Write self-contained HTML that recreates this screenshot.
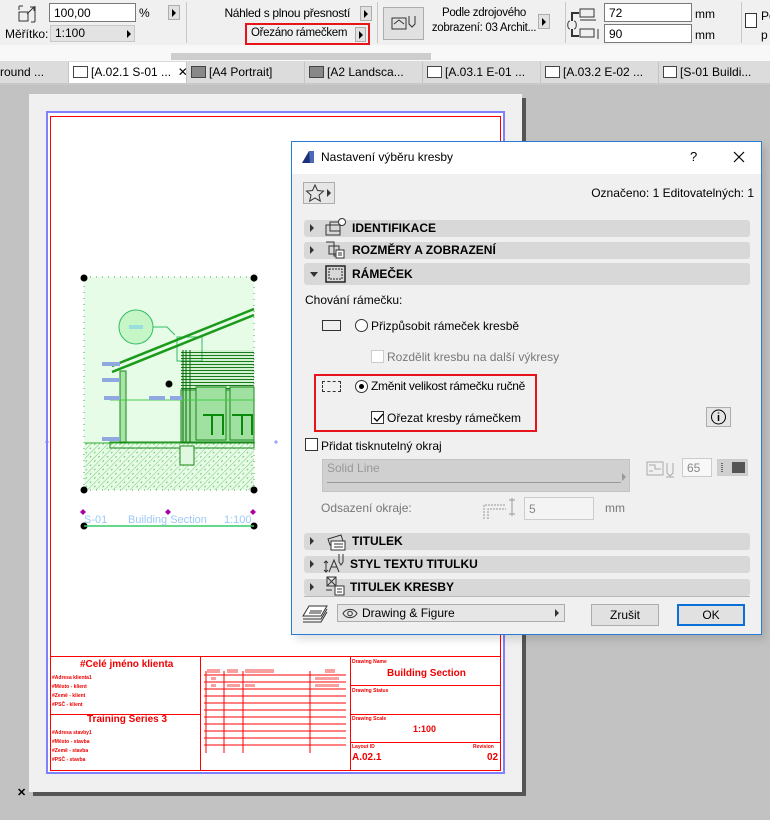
<!DOCTYPE html>
<html><head><meta charset="utf-8">
<style>
*{margin:0;padding:0;box-sizing:border-box}
body{width:770px;height:820px;overflow:hidden;background:#c2c2c2;font-family:"Liberation Sans",sans-serif;font-size:12px;color:#000;position:relative}
.a{position:absolute;white-space:nowrap}
.tb{letter-spacing:-0.3px}
.fld{position:absolute;background:#fff;border:1px solid #7a7a7a;font-size:12px;padding:1px 0 0 4px;line-height:16px}
.btn{position:absolute;background:#e1e1e1;border:1px solid #adadad}
.tri{width:0;height:0;border-top:4px solid transparent;border-bottom:4px solid transparent;border-left:4px solid #000;position:absolute}
.sep{position:absolute;width:1px;background:#c8c8c8}
.tab{position:absolute;top:62px;height:21px;font-size:12px;line-height:21px;padding-left:4px;white-space:nowrap;overflow:hidden;border-right:1px solid #c4c4c4}
.ti{display:inline-block;width:15px;height:12px;border:1px solid #444;vertical-align:-2px;margin-right:3px;background:#fff}
.sec{position:absolute;left:304px;width:446px;height:17px;background:#d8d8d8;border-radius:3px;font-weight:bold;font-size:12px;line-height:17px}
.sec .tri{left:6px;top:4px;border-left-color:#333}
.sec span{position:absolute;left:48px}
.rt{font-family:"Liberation Sans",sans-serif;color:#e00;font-weight:bold;position:absolute;white-space:nowrap}
</style></head><body>

<!-- toolbar -->
<div class="a" style="left:0;top:0;width:770px;height:45px;background:#f0f0f0"></div>
<div class="a" style="left:0;top:45px;width:770px;height:16px;background:#f8f8f8"></div>
<div class="a" style="left:171px;top:53px;width:260px;height:7px;background:#cdcdcd"></div>
<svg class="a" style="left:18px;top:5px" width="18" height="18"><rect x="1" y="7" width="9" height="9" fill="none" stroke="#333"/><path d="M1 1h4M1 1v4M17 1v16M17 17h-4M9 9l7-7M12 2h4v4" fill="none" stroke="#333"/></svg>
<div class="fld" style="left:49px;top:3px;width:87px;height:19px">100,00</div>
<div class="a" style="left:139px;top:6px">%</div>
<div class="btn" style="left:168px;top:5px;width:12px;height:15px"><div class="tri" style="left:3px;top:3px"></div></div>
<div class="a" style="left:5px;top:27px">Měřítko:</div>
<div class="a" style="left:50px;top:25px;width:85px;height:17px;background:#e3e3e3;border:1px solid #c8c8c8;padding-left:4px;line-height:15px">1:100<div class="tri" style="left:76px;top:4px"></div></div>
<div class="sep" style="left:186px;top:2px;height:41px"></div>
<div class="a tb" style="left:200px;top:6px;width:150px;text-align:right">Náhled s plnou přesností</div>
<div class="btn" style="left:360px;top:6px;width:12px;height:15px"><div class="tri" style="left:3px;top:3px"></div></div>
<div class="a" style="left:245px;top:23px;width:125px;height:22px;border:2px solid #e8141c"></div>
<div class="a tb" style="left:251px;top:27px;font-size:11.5px">Ořezáno rámečkem</div>
<div class="btn" style="left:355px;top:27px;width:11px;height:15px"><div class="tri" style="left:3px;top:3px"></div></div>
<div class="sep" style="left:377px;top:2px;height:41px"></div>
<div class="btn" style="left:383px;top:7px;width:41px;height:33px"><svg width="39" height="31"><rect x="8" y="10" width="14" height="11" fill="none" stroke="#333"/><path d="M10 16l5-4 5 4M25 8v8l3 3 3-3V8" fill="none" stroke="#333"/></svg></div>
<div class="a tb" style="left:426px;top:6px;width:116px;text-align:center;line-height:15px;font-size:11.5px">Podle zdrojového<br>zobrazení: 03 Archit...</div>
<div class="btn" style="left:538px;top:14px;width:12px;height:15px"><div class="tri" style="left:3px;top:3px"></div></div>
<div class="sep" style="left:565px;top:2px;height:41px"></div>
<svg class="a" style="left:566px;top:3px" width="36" height="40"><path d="M8 10h-2v8M6 26v7h4M8 10h5M6 33h7" fill="none" stroke="#333" stroke-width="2"/><rect x="14" y="6" width="14" height="8" fill="none" stroke="#333"/><rect x="14" y="26" width="14" height="8" fill="none" stroke="#333"/><path d="M14 17h16M32 26v10" stroke="#333"/><path d="M4 18c-3 0-3 8 0 8M8 18c3 0 3 8 0 8" fill="none" stroke="#333"/></svg>
<div class="fld" style="left:604px;top:3px;width:88px;height:19px">72</div>
<div class="fld" style="left:604px;top:24px;width:88px;height:19px">90</div>
<div class="a" style="left:695px;top:7px">mm</div>
<div class="a" style="left:695px;top:28px">mm</div>
<div class="sep" style="left:741px;top:2px;height:41px"></div>
<div class="a" style="left:745px;top:13px;width:12px;height:15px;border:1px solid #333;background:#fff"></div>
<div class="a" style="left:761px;top:7px;line-height:19px">Po<br>p</div>

<!-- tabs -->
<div class="a" style="left:0;top:61px;width:770px;height:23px;background:#dcdcdc"></div>
<div class="a" style="left:0;top:83px;width:770px;height:2px;background:#c8c8c8"></div>
<div class="tab" style="left:0;width:69px;padding-left:0">round ...</div>
<div class="tab" style="left:69px;width:118px;background:#fff"><span class="ti"></span>[A.02.1 S-01 ... &nbsp;✕</div>
<div class="tab" style="left:187px;width:118px"><span class="ti" style="background:#888"></span>[A4 Portrait]</div>
<div class="tab" style="left:305px;width:118px"><span class="ti" style="background:#888"></span>[A2 Landsca...</div>
<div class="tab" style="left:423px;width:118px"><span class="ti"></span>[A.03.1 E-01 ...</div>
<div class="tab" style="left:541px;width:118px"><span class="ti"></span>[A.03.2 E-02 ...</div>
<div class="tab" style="left:659px;width:118px;border:none"><span class="ti" style="border-radius:0;width:14px"></span>[S-01 Buildi...</div>

<!-- paper -->
<div class="a" style="left:33px;top:98px;width:493px;height:698px;background:#555"></div>
<div class="a" style="left:29px;top:94px;width:493px;height:698px;background:#f0f0f0"></div>
<div class="a" style="left:46px;top:111px;width:459px;height:663px;border:2px solid #8080ff;background:#fff"></div>
<div class="a" style="left:50px;top:116px;width:451px;height:655px;border:1px solid #f00"></div>
<div class="a" style="left:17px;top:786px;font-size:11px;font-weight:bold">✕</div>

<!-- title block -->
<div class="a" style="left:51px;top:656px;width:450px;height:1px;background:#f00"></div>
<div class="a" style="left:200px;top:657px;width:1px;height:114px;background:#f00"></div>
<div class="a" style="left:350px;top:657px;width:1px;height:114px;background:#f00"></div>
<div class="a" style="left:51px;top:714px;width:149px;height:1px;background:#f00"></div>
<div class="a" style="left:350px;top:685px;width:151px;height:1px;background:#f00"></div>
<div class="a" style="left:350px;top:714px;width:151px;height:1px;background:#f00"></div>
<div class="a" style="left:350px;top:742px;width:151px;height:1px;background:#f00"></div>
<svg class="a" style="left:202px;top:668px" width="146" height="86">
<g stroke="#f00" stroke-width="1"><path d="M4 3v82M22 3v82M41 3v82M108 3v82"/>
<path d="M2 7h142M2 14h142M2 21h142M2 28h142M2 35h142M2 42h142M2 49h142M2 56h142M2 63h142M2 70h142M2 77h142"/></g>
<g fill="#f8a0a0"><rect x="5" y="1" width="13" height="4"/><rect x="25" y="1" width="11" height="4"/><rect x="43" y="1" width="29" height="4"/><rect x="123" y="1" width="10" height="4"/><rect x="9" y="9" width="5" height="3"/><rect x="113" y="9" width="24" height="3"/><rect x="9" y="16" width="5" height="3"/><rect x="25" y="16" width="13" height="3"/><rect x="43" y="16" width="10" height="3"/><rect x="113" y="16" width="24" height="3"/></g></svg>
<div class="rt" style="left:80px;top:659px;font-size:10px">#Celé jméno klienta</div>
<div class="rt" style="left:52px;top:674px;font-size:5px;line-height:9px">#Adresa klienta1<br>#Město - klient<br>#Země - klient<br>#PSČ - klient</div>
<div class="rt" style="left:87px;top:714px;font-size:10px">Training Series 3</div>
<div class="rt" style="left:52px;top:729px;font-size:5px;line-height:9px">#Adresa stavby1<br>#Město - stavba<br>#Země - stavba<br>#PSČ - stavba</div>
<div class="rt" style="left:352px;top:659px;font-size:5px">Drawing Name</div>
<div class="rt" style="left:387px;top:668px;font-size:10px">Building Section</div>
<div class="rt" style="left:352px;top:688px;font-size:5px">Drawing Status</div>
<div class="rt" style="left:352px;top:716px;font-size:5px">Drawing Scale</div>
<div class="rt" style="left:413px;top:724px;font-size:9px">1:100</div>
<div class="rt" style="left:352px;top:744px;font-size:5px">Layout ID</div>
<div class="rt" style="left:473px;top:744px;font-size:5px">Revision</div>
<div class="rt" style="left:352px;top:752px;font-size:10px">A.02.1</div>
<div class="rt" style="left:487px;top:752px;font-size:10px">02</div>

<!-- drawing -->
<svg class="a" style="left:0;top:0" width="290" height="540">
<defs><pattern id="h" width="6" height="6" patternUnits="userSpaceOnUse" patternTransform="rotate(45)"><path d="M0 0v6M3 0v2" stroke="#5cb85c" stroke-width="0.8"/></pattern>
<pattern id="g" width="3" height="3" patternUnits="userSpaceOnUse"><path d="M0 1.5h3" stroke="#1a7a1a" stroke-width="1.2"/></pattern></defs>
<rect x="84" y="277" width="170" height="213" fill="#e6fce6"/>
<rect x="84" y="277" width="170" height="213" fill="none" stroke="#4cae4c" stroke-dasharray="1 5"/>
<rect x="85" y="443" width="169" height="47" fill="url(#h)"/>
<path d="M85 443h170" stroke="#3a3" stroke-width="1"/>
<circle cx="136" cy="327" r="17" fill="#c6f5c6" stroke="#3b6"/>
<rect x="129" y="325" width="14" height="4" fill="#9dd"/>
<path d="M153 327h14l8 8" fill="none" stroke="#3b6"/>
<rect x="177" y="337" width="25" height="24" fill="none" stroke="#3b6"/>
<path d="M112 366l142-57M112 372l142-57" stroke="#1a9a1a" stroke-width="2.5"/>
<rect x="120" y="371" width="6" height="72" fill="#a8e6a8" stroke="#1a8a1a"/>
<rect x="181" y="350" width="73" height="64" fill="url(#g)"/>
<rect x="181" y="390" width="73" height="53" fill="#9fdf9f" stroke="#1a8a1a"/>
<path d="M183 350v93M186 350v93M190 350v93" stroke="#0a6a0a"/>
<rect x="196" y="387" width="30" height="53" fill="#a0e0a0" stroke="#1a8a1a"/><rect x="230" y="387" width="24" height="53" fill="#a0e0a0" stroke="#1a8a1a"/>
<path d="M203 415h20v20M212 415v20M232 415h20v20M242 415v20" fill="none" stroke="#0a8a0a" stroke-width="2"/>
<path d="M110 400h144" stroke="#4c4" />
<rect x="110" y="442" width="144" height="6" fill="none" stroke="#1a8a1a"/>
<rect x="180" y="446" width="14" height="19" fill="#e0f8e0" stroke="#1a8a1a"/>
<g fill="#8fa8e0"><rect x="102" y="362" width="18" height="4"/><rect x="102" y="378" width="18" height="4"/><rect x="104" y="396" width="16" height="4"/><rect x="149" y="396" width="16" height="4"/><rect x="170" y="396" width="12" height="4"/><rect x="102" y="437" width="18" height="4"/></g>
<g fill="#000"><circle cx="84" cy="278" r="3.5"/><circle cx="254" cy="278" r="3.5"/><circle cx="84" cy="490" r="3.5"/><circle cx="254" cy="490" r="3.5"/><circle cx="169" cy="384" r="3.5"/><circle cx="84" cy="526" r="3.5"/><circle cx="254" cy="526" r="3.5"/></g>
<path d="M84 526h170" stroke="#3c6" stroke-width="1.5"/>
<text x="84" y="523" font-family="Liberation Sans" font-size="11" fill="#9ec8f8">S-01</text>
<text x="128" y="523" font-family="Liberation Sans" font-size="11" fill="#9ec8f8">Building Section</text>
<text x="224" y="523" font-family="Liberation Sans" font-size="11" fill="#9ec8f8">1:100</text>
<g fill="#a0a"><path d="M83 509l3 3-3 3-3-3z"/><path d="M168 509l3 3-3 3-3-3z"/><path d="M253 509l3 3-3 3-3-3z"/></g>
<path d="M45 442h4M274 442h4M276 440v4" stroke="#88f"/>
</svg>

<!-- dialog -->
<div class="a" style="left:296px;top:146px;width:470px;height:494px;background:rgba(0,0,0,0.12);filter:blur(4px)"></div>
<div class="a" style="left:291px;top:141px;width:471px;height:494px;background:#f0f0f0;border:1px solid #2a7bd4"></div>
<div class="a" style="left:292px;top:142px;width:469px;height:32px;background:#fff"></div>
<svg class="a" style="left:301px;top:150px" width="14" height="14"><path d="M1 13L8 1h5v12z" fill="#1c2f7a"/><path d="M8 1h5v12H9z" fill="#4a6ab8"/></svg>
<div class="a" style="left:321px;top:150px;font-size:12px">Nastavení výběru kresby</div>
<div class="a" style="left:690px;top:149px;font-size:13px">?</div>
<svg class="a" style="left:733px;top:151px" width="12" height="12"><path d="M1 1l10 10M11 1L1 11" stroke="#000" stroke-width="1.2"/></svg>
<div class="btn" style="left:303px;top:182px;width:32px;height:22px;background:#e6e6e6"><svg width="30" height="20"><path d="M11 2l2.5 5.5 6 .6-4.5 4 1.3 6L11 15l-5.3 3.1 1.3-6-4.5-4 6-.6z" fill="none" stroke="#333"/><path d="M23 6l4 4-4 4z" fill="#333"/></svg></div>
<div class="a" style="left:560px;top:186px;width:194px;text-align:right">Označeno: 1 Editovatelných: 1</div>

<div class="sec" style="top:220px"><div class="tri"></div><svg class="a" style="left:21px;top:-2px" width="22" height="20"><rect x="1" y="7" width="14" height="10" fill="none" stroke="#333"/><rect x="5" y="4" width="10" height="9" fill="none" stroke="#333"/><circle cx="17" cy="4" r="3.5" fill="#fff" stroke="#333"/></svg><span>IDENTIFIKACE</span></div>
<div class="sec" style="top:242px"><div class="tri"></div><svg class="a" style="left:21px;top:-1px" width="22" height="20"><path d="M1 1h8v14h6" fill="none" stroke="#333"/><rect x="4" y="5" width="10" height="8" fill="none" stroke="#333"/><rect x="11" y="9" width="8" height="8" fill="#fff" stroke="#333"/><path d="M13 12h4M13 14h4" stroke="#333"/></svg><span>ROZMĚRY A ZOBRAZENÍ</span></div>
<div class="sec" style="top:263px;height:22px;line-height:22px"><div class="tri" style="left:6px;top:9px;border-left:4px solid transparent;border-right:4px solid transparent;border-top:5px solid #333;border-bottom:none"></div><svg class="a" style="left:21px;top:2px" width="22" height="20"><rect x="1" y="1" width="19" height="16" fill="none" stroke="#222" stroke-width="1.5"/><rect x="4" y="4" width="13" height="10" fill="none" stroke="#222" stroke-dasharray="2 1"/></svg><span>RÁMEČEK</span></div>

<div class="a" style="left:305px;top:293px">Chování rámečku:</div>
<div class="a" style="left:322px;top:320px;width:19px;height:11px;border:1px solid #333"></div>
<div class="a" style="left:355px;top:319px;width:13px;height:13px;border:1px solid #333;border-radius:50%;background:#fff"></div>
<div class="a" style="left:371px;top:319px">Přizpůsobit rámeček kresbě</div>
<div class="a" style="left:371px;top:350px;width:13px;height:13px;border:1px solid #ccc;background:#fff"></div>
<div class="a" style="left:387px;top:350px;color:#777">Rozdělit kresbu na další výkresy</div>
<div class="a" style="left:314px;top:374px;width:223px;height:58px;border:2px solid #e8141c"></div>
<div class="a" style="left:322px;top:381px;width:19px;height:11px;border:1px dashed #333"></div>
<div class="a" style="left:355px;top:380px;width:13px;height:13px;border:1px solid #333;border-radius:50%;background:#fff"><div class="a" style="left:3px;top:3px;width:5px;height:5px;border-radius:50%;background:#000"></div></div>
<div class="a tb" style="left:371px;top:379px">Změnit velikost rámečku ručně</div>
<div class="a" style="left:371px;top:411px;width:13px;height:13px;border:1px solid #333;background:#fff"><svg class="a" style="left:0;top:0" width="12" height="12"><path d="M2 6l3 3 6-7" fill="none" stroke="#000" stroke-width="1.3"/></svg></div>
<div class="a" style="left:387px;top:411px">Ořezat kresby rámečkem</div>
<div class="btn" style="left:706px;top:407px;width:25px;height:20px;background:#e6e6e6"><svg width="23" height="18"><circle cx="11.5" cy="9" r="7" fill="none" stroke="#000"/><path d="M11.5 7v6M11.5 4.5v1" stroke="#000" stroke-width="1.5"/></svg></div>

<div class="a" style="left:305px;top:438px;width:13px;height:13px;border:1px solid #333;background:#fff"></div>
<div class="a" style="left:321px;top:439px">Přidat tisknutelný okraj</div>
<div class="a" style="left:322px;top:459px;width:308px;height:33px;background:#d0d0d0;border:1px solid #c4c4c4"></div>
<div class="a" style="left:327px;top:461px;color:#999">Solid Line</div>
<div class="a" style="left:327px;top:482px;width:294px;height:1px;background:#999"></div>
<div class="tri" style="left:622px;top:473px;border-left-color:#999"></div>
<svg class="a" style="left:646px;top:461px" width="36" height="17"><rect x="1" y="1" width="16" height="13" fill="none" stroke="#aaa"/><path d="M3 4h6v4h6M3 10h4" fill="none" stroke="#aaa"/><path d="M21 2v10l3 3 3-3V2M20 16h8" fill="none" stroke="#aaa"/></svg>
<div class="a" style="left:682px;top:458px;width:30px;height:19px;border:1px solid #ccc;background:#f8f8f8;color:#888;padding:2px 0 0 4px">65</div>
<div class="a" style="left:717px;top:459px;width:31px;height:17px;background:#d0d0d0;border:1px solid #ccc"><svg width="30" height="15"><path d="M4 3v10" stroke="#000" stroke-dasharray="1 1"/><rect x="14" y="2" width="13" height="11" fill="#555"/></svg></div>
<div class="a" style="left:321px;top:501px;color:#777">Odsazení okraje:</div>
<svg class="a" style="left:482px;top:496px" width="36" height="24"><path d="M2 23V9h22M6 23V13h18" fill="none" stroke="#999" stroke-dasharray="2 1"/><path d="M30 2v18M27 4h6M27 18h6" stroke="#999"/></svg>
<div class="a" style="left:524px;top:497px;width:70px;height:23px;border:1px solid #ccc;background:#f4f4f4;color:#888;padding:4px 0 0 4px">5</div>
<div class="a" style="left:605px;top:501px;color:#777">mm</div>

<div class="sec" style="top:533px"><div class="tri"></div><svg class="a" style="left:22px;top:0" width="22" height="18"><path d="M2 6l13-4 2 6-13 4z" fill="none" stroke="#333"/><rect x="5" y="8" width="14" height="9" fill="#fff" stroke="#333"/><path d="M8 11h9M8 14h9" stroke="#333"/></svg><span>TITULEK</span></div>
<div class="sec" style="top:556px"><div class="tri"></div><svg class="a" style="left:19px;top:-3px" width="22" height="20"><path d="M3 8v11M1 10l2-2 2 2M1 17l2 2 2-2" fill="none" stroke="#333"/><path d="M6 19l5-12 5 12M8 14h6" fill="none" stroke="#333"/><path d="M16 1v8l2 3 2-3V1" fill="none" stroke="#333"/></svg><span style="left:46px">STYL TEXTU TITULKU</span></div>
<div class="sec" style="top:579px"><div class="tri"></div><svg class="a" style="left:20px;top:-3px" width="22" height="20"><rect x="3" y="1" width="9" height="9" fill="none" stroke="#333"/><path d="M3 1l9 9M12 1l-9 9" stroke="#333"/><rect x="11" y="10" width="9" height="9" fill="#fff" stroke="#333"/><path d="M13 13h5M13 16h5M2 14h6" stroke="#333"/></svg><span style="left:46px">TITULEK KRESBY</span></div>
<div class="a" style="left:304px;top:596px;width:446px;height:1px;background:#b8b8b8"></div>

<svg class="a" style="left:301px;top:603px" width="28" height="20"><path d="M2 13l6-10h18l-6 10z" fill="#fff" stroke="#333"/><path d="M2 16h18l6-10M2 19h18l6-10" fill="none" stroke="#333"/><path d="M9 8h12M8 10h12" stroke="#333"/></svg>
<div class="a" style="left:337px;top:604px;width:228px;height:18px;background:#e6e6e6;border:1px solid #adadad"><svg class="a" style="left:4px;top:3px" width="16" height="11"><path d="M1 5.5C4 0 12 0 15 5.5 12 11 4 11 1 5.5z" fill="none" stroke="#333"/><circle cx="8" cy="5.5" r="2.3" fill="none" stroke="#333"/></svg><div class="a" style="left:24px;top:1px">Drawing &amp; Figure</div><div class="tri" style="left:217px;top:4px;border-left-color:#333"></div></div>
<div class="btn" style="left:591px;top:604px;width:68px;height:22px;line-height:20px;text-align:center">Zrušit</div>
<div class="btn" style="left:677px;top:604px;width:68px;height:22px;line-height:18px;text-align:center;border:2px solid #0a6fd6">OK</div>
</body></html>
